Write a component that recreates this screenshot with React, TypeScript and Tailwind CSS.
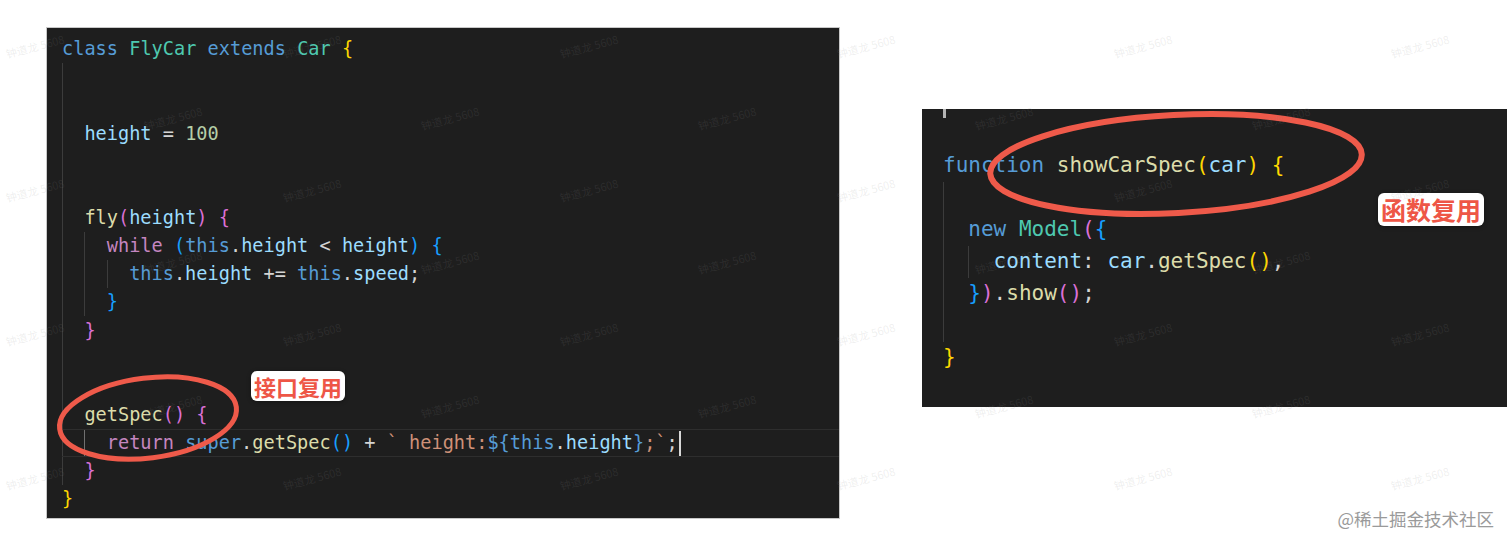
import React from 'react';

type Tok = [string, string];
type Line = { g: number; a?: number; t: Tok[]; hl?: boolean; cursor?: boolean; bright?: boolean };

const K = 'text-[#569cd6]';
const C = 'text-[#4ec9b0]';
const V = 'text-[#9cdcfe]';
const N = 'text-[#b5cea8]';
const F = 'text-[#dcdcaa]';
const R = 'text-[#c586c0]';
const S = 'text-[#ce9178]';
const P = 'text-[#d4d4d4]';
const Y = 'text-[#ffd700]';
const M = 'text-[#da70d6]';
const B = 'text-[#179fff]';

const leftLines: Line[] = [
    { g: 0, t: [['class', K], [' ', P], ['FlyCar', C], [' ', P], ['extends', K], [' ', P], ['Car', C], [' ', P], ['{', Y]] },
    { g: 1, t: [] },
    { g: 1, t: [] },
    { g: 1, t: [['height', V], [' = ', P], ['100', N]] },
    { g: 1, t: [] },
    { g: 1, t: [] },
    { g: 1, t: [['fly', F], ['(', M], ['height', V], [')', M], [' ', P], ['{', M]] },
    { g: 2, t: [['while', R], [' ', P], ['(', B], ['this', K], ['.', P], ['height', V], [' < ', P], ['height', V], [')', B], [' ', P], ['{', B]] },
    { g: 3, t: [['this', K], ['.', P], ['height', V], [' += ', P], ['this', K], ['.', P], ['speed', V], [';', P]] },
    { g: 2, t: [['}', B]] },
    { g: 1, t: [['}', M]] },
    { g: 1, t: [] },
    { g: 1, t: [] },
    { g: 1, t: [['getSpec', F], ['()', M], [' ', P], ['{', M]] },
    {
        g: 2,
        a: 1,
        hl: true,
        cursor: true,
        t: [
            ['return', R], [' ', P], ['super', K], ['.', P], ['getSpec', F], ['()', B], [' + ', P],
            ['` height:', S], ['${', K], ['this', K], ['.', P], ['height', V], ['}', K], [';`', S], [';', P],
        ],
    },
    { g: 1, t: [['}', M]] },
    { g: 0, t: [['}', Y]] },
];

const rightLines: Line[] = [
    { g: 1, bright: true, t: [] },
    { g: 0, t: [] },
    { g: 0, t: [['function', K], [' ', P], ['showCarSpec', F], ['(', Y], ['car', V], [')', Y], [' ', P], ['{', Y]] },
    { g: 1, t: [] },
    { g: 1, t: [['new', K], [' ', P], ['Model', C], ['(', M], ['{', B]] },
    { g: 2, t: [['content', V], [': ', P], ['car', V], ['.', P], ['getSpec', F], ['()', Y], [',', P]] },
    { g: 1, t: [['}', B], [')', M], ['.', P], ['show', F], ['()', M], [';', P]] },
    { g: 1, t: [] },
    { g: 0, t: [['}', Y]] },
];

const CodeLine: React.FC<{ line: Line; big?: boolean }> = ({ line, big }) => (
    <div
        className={`flex items-center whitespace-pre box-border ${big ? 'h-[32px]' : 'h-[28.15px]'} ${
            line.hl ? 'border-y border-[#2e2e2e]' : ''
        }`}
    >
        {Array.from({ length: line.g }).map((_, i) => (
            <span
                key={i}
                className={`inline-block w-[2ch] self-stretch ${
                    line.bright
                        ? 'border-l-[3px] border-[#b4b4b4]'
                        : line.a === i
                        ? 'border-l border-[#707070]'
                        : 'border-l border-[#3c3c3c]'
                }`}
            />
        ))}
        {line.t.map(([text, cls], i) => (
            <span key={i} className={cls}>
                {text}
            </span>
        ))}
        {line.cursor && <span className="inline-block w-[2px] h-[25px] bg-[#d8d8d8] ml-[1px]" />}
    </div>
);

const Label: React.FC<{ text: string; className: string }> = ({ text, className }) => (
    <div
        className={`absolute bg-white rounded-md px-[3px] shadow-[0_1px_4px_rgba(0,0,0,0.35)] font-bold text-[#ee5646] leading-none py-[4px] ${className}`}
        style={{ fontFamily: '"Noto Sans CJK SC", "Noto Sans", sans-serif' }}
    >
        {text}
    </div>
);

// faint repeating watermark over the whole screenshot
const Watermarks: React.FC = () => {
    const marks: { x: number; y: number }[] = [];
    for (let r = 0; r < 7; r++) {
        for (let c = 0; c < 6; c++) {
            const x = 5 + (r % 2) * 138 + c * 277;
            if (x < 1430) marks.push({ x, y: 38 + r * 72 });
        }
    }
    return (
        <div className="absolute inset-0 pointer-events-none overflow-hidden">
            {marks.map((m, i) => (
                <span
                    key={i}
                    className="absolute text-[11px] text-[#8a8a8a]/15 -rotate-[15deg] whitespace-nowrap"
                    style={{ left: m.x, top: m.y, fontFamily: '"Noto Sans CJK SC", sans-serif' }}
                >
                    钟道龙 5608
                </span>
            ))}
        </div>
    );
};

export default function App() {
    return (
        <div className="relative w-full h-[547px] bg-white overflow-hidden">
            <div className="flex items-start pl-[46px] pt-[27px] gap-[82px]">
                <div
                    className="relative w-[794px] h-[492px] bg-[#1e1e1e] border border-[#c8c8c8] pl-[15px] pt-[7px] text-[18.6px] overflow-hidden"
                    style={{ fontFamily: '"DejaVu Sans Mono", "Liberation Mono", monospace' }}
                >
                    {leftLines.map((l, i) => (
                        <CodeLine key={i} line={l} />
                    ))}
                    <svg className="absolute left-0 top-0 pointer-events-none" width="794" height="492">
                        <ellipse
                            cx="101"
                            cy="390"
                            rx="89"
                            ry="40"
                            transform="rotate(-7 101 390)"
                            fill="none"
                            stroke="#ef5a4a"
                            strokeWidth="5"
                        />
                    </svg>
                    <Label text="接口复用" className="left-[204px] top-[343px] text-[22px]" />
                </div>

                <div
                    className="relative w-[585px] h-[298px] mt-[82px] bg-[#1e1e1e] pl-[21px] text-[21px] overflow-hidden"
                    style={{ fontFamily: '"DejaVu Sans Mono", "Liberation Mono", monospace' }}
                >
                    <div className="-mt-[23px]">
                        {rightLines.map((l, i) => (
                            <CodeLine key={i} line={l} big />
                        ))}
                    </div>
                    <svg className="absolute left-0 top-0 pointer-events-none" width="585" height="298">
                        <ellipse
                            cx="254"
                            cy="55"
                            rx="186"
                            ry="49"
                            transform="rotate(-3 254 55)"
                            fill="none"
                            stroke="#ef5a4a"
                            strokeWidth="6"
                        />
                    </svg>
                    <Label text="函数复用" className="left-[456px] top-[84px] text-[25px]" />
                </div>
            </div>

            <Watermarks />

            <div
                className="absolute right-[18px] bottom-[15px] text-[17.5px] text-[#9a9a9a]"
                style={{ fontFamily: '"Noto Sans CJK SC", "Noto Sans", sans-serif' }}
            >
                @稀土掘金技术社区
            </div>
        </div>
    );
}
